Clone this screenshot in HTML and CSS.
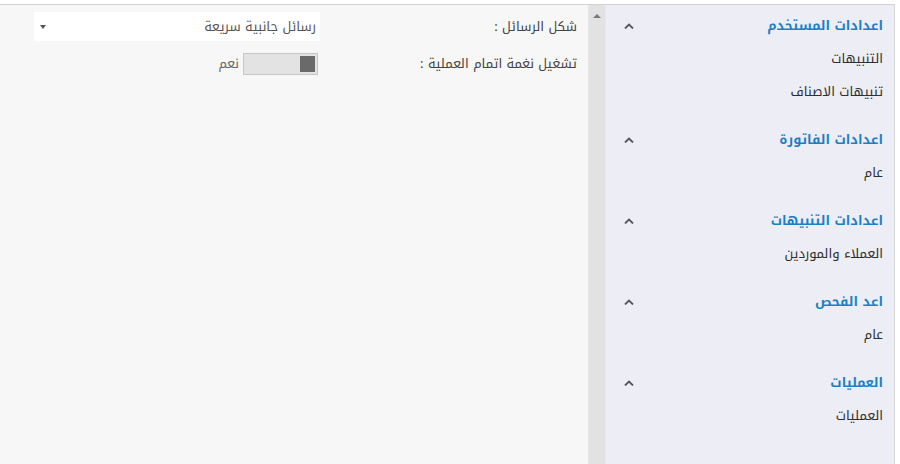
FILE: index.html
```
<!DOCTYPE html>
<html lang="ar" dir="rtl">
<head>
    <meta charset="UTF-8" />
    <meta name="viewport" content="width=device-width, initial-scale=1.0" />
    <title>الاعدادات</title>
    <link rel="stylesheet" href="styles.css">
</head>
<body>

    <div class="frame">

        <div class="sidebar">
            <div class="group">
                <div class="group-head">
                    <span>اعدادات المستخدم</span>
                    <svg class="chevron" width="10" height="6" viewBox="0 0 10 6"><polyline points="1,5.5 5,1.5 9,5.5" fill="none" stroke="#555" stroke-width="1.8"/></svg>
                </div>
                <div class="item">التنبيهات</div>
                <div class="item">تنبيهات الاصناف</div>
            </div>

            <div class="group">
                <div class="group-head">
                    <span>اعدادات الفاتورة</span>
                    <svg class="chevron" width="10" height="6" viewBox="0 0 10 6"><polyline points="1,5.5 5,1.5 9,5.5" fill="none" stroke="#555" stroke-width="1.8"/></svg>
                </div>
                <div class="item">عام</div>
            </div>

            <div class="group">
                <div class="group-head">
                    <span>اعدادات التنبيهات</span>
                    <svg class="chevron" width="10" height="6" viewBox="0 0 10 6"><polyline points="1,5.5 5,1.5 9,5.5" fill="none" stroke="#555" stroke-width="1.8"/></svg>
                </div>
                <div class="item">العملاء والموردين</div>
            </div>

            <div class="group">
                <div class="group-head">
                    <span>اعد الفحص</span>
                    <svg class="chevron" width="10" height="6" viewBox="0 0 10 6"><polyline points="1,5.5 5,1.5 9,5.5" fill="none" stroke="#555" stroke-width="1.8"/></svg>
                </div>
                <div class="item">عام</div>
            </div>

            <div class="group">
                <div class="group-head">
                    <span>العمليات</span>
                    <svg class="chevron" width="10" height="6" viewBox="0 0 10 6"><polyline points="1,5.5 5,1.5 9,5.5" fill="none" stroke="#555" stroke-width="1.8"/></svg>
                </div>
                <div class="item">العمليات</div>
            </div>
        </div>

        <div class="scrollbar">
            <span class="scroll-up"></span>
        </div>

        <div class="content">
            <div class="form-row">
                <label class="form-label">شكل الرسائل :</label>
                <div class="form-control">
                    <div class="select-box">
                        <span>رسائل جانبية سريعة</span>
                        <span class="select-arrow"></span>
                    </div>
                </div>
            </div>

            <div class="form-row">
                <label class="form-label">تشغيل نغمة اتمام العملية :</label>
                <div class="form-control">
                    <div class="toggle">
                        <span class="toggle-knob"></span>
                    </div>
                    <span class="toggle-text">نعم</span>
                </div>
            </div>
        </div>

    </div>

</body>
</html>
```

FILE: styles.css
```
body {
    margin: 0;
    background: #ffffff;
    font-family: "Noto Kufi Arabic", "Noto Sans Arabic", "DejaVu Sans", sans-serif;
    font-size: 13px;
    color: #333;
}

.frame {
    margin-top: 4px;
    margin-right: 5px;
    height: 459px;
    border-top: 1px solid #d2d2d2;
    border-right: 1px solid #d6d6d6;
    display: flex;
    overflow: hidden;
}

/* right side menu */
.sidebar {
    width: 288px;
    flex-shrink: 0;
    background: #ededf6;
    padding: 4px 11px 0 0;
    box-sizing: border-box;
}

.group {
    padding-bottom: 15px;
}

.group-head {
    height: 33px;
    display: flex;
    align-items: center;
    justify-content: space-between;
    padding-left: 18px;
}

    .group-head span {
        color: #1b7fc4;
        font-weight: bold;
        font-size: 13px;
    }

.chevron {
    display: block;
}

.item {
    height: 33px;
    line-height: 33px;
    color: #2e2e2e;
}

.scrollbar {
    width: 16px;
    flex-shrink: 0;
    background: #e2e2e2;
    border-right: 1px solid #e8e8ea;
    border-left: 1px solid #e6e6e6;
    position: relative;
}

.scroll-up {
    position: absolute;
    top: 9px;
    left: 4px;
    width: 0;
    height: 0;
    border-left: 4px solid transparent;
    border-right: 4px solid transparent;
    border-bottom: 4px solid #7a7a7a;
}

/* settings form */
.content {
    flex: 1;
    background: #f7f7f7;
    padding-top: 7px;
}

.form-row {
    display: flex;
    align-items: center;
    margin-bottom: 10px;
}

.form-label {
    width: 268px;
    padding-right: 11px;
    box-sizing: border-box;
    color: #444;
    flex-shrink: 0;
}

.form-control {
    display: flex;
    align-items: center;
    gap: 4px;
}

.select-box {
    width: 286px;
    height: 29px;
    background: #fff;
    display: flex;
    align-items: center;
    justify-content: space-between;
    padding: 0 4px 0 6px;
    box-sizing: border-box;
    color: #555;
}

.select-arrow {
    width: 0;
    height: 0;
    border-left: 3px solid transparent;
    border-right: 3px solid transparent;
    border-top: 4px solid #555;
}

.toggle {
    width: 75px;
    height: 22px;
    margin-right: 2px;
    border: 1px solid #c6c6c6;
    background: #e3e3e3;
    box-sizing: border-box;
    padding: 2px;
    display: flex;
}

.toggle-knob {
    width: 15px;
    background: #6a6a6a;
}

.toggle-text {
    color: #666;
}
```
